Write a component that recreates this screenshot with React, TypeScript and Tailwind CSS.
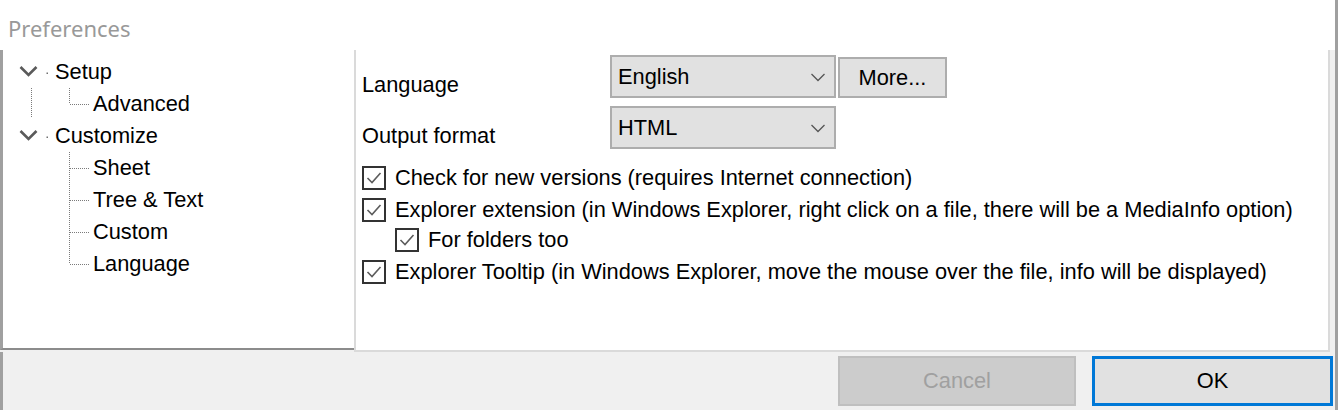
import React from "react";

const font = { fontFamily: '"Liberation Sans", Arial, sans-serif' };

function Chevron() {
  return (
    <svg width="52" height="32" viewBox="0 0 52 32" className="shrink-0">
      <polyline points="17.5,11 25.5,19 33.5,11" fill="none" stroke="#5a5a5a" strokeWidth="2.6" />
      <rect x="43.5" y="16.5" width="1.5" height="1.5" fill="#707070" />
    </svg>
  );
}

type ChildLine = "first-only" | "mid" | "last";

function ChildLines({ kind, parentPass }: { kind: ChildLine; parentPass?: boolean }) {
  const dots = { fill: "none", stroke: "#7a7a7a", strokeWidth: 1, strokeDasharray: "1 1" };
  return (
    <svg width="90" height="32" viewBox="0 0 90 32" className="shrink-0">
      {parentPass && <line x1="28.5" y1="0" x2="28.5" y2="30" {...dots} />}
      <line x1="66.5" y1={kind === "first-only" ? 0 : -2} x2="66.5" y2={kind === "mid" ? 32 : 16} {...dots} />
      <line x1="67" y1="16.5" x2="86" y2="16.5" {...dots} />
    </svg>
  );
}

function TopItem({ label }: { label: string }) {
  return (
    <div className="flex h-[32px] items-center">
      <Chevron />
      <span className="leading-none text-black">{label}</span>
    </div>
  );
}

function ChildItem({ label, kind, parentPass }: { label: string; kind: ChildLine; parentPass?: boolean }) {
  return (
    <div className="flex h-[32px] items-center">
      <ChildLines kind={kind} parentPass={parentPass} />
      <span className="leading-none text-black">{label}</span>
    </div>
  );
}

function Tree() {
  return (
    <div className="flex h-[300px] w-[354px] flex-col border-b-2 border-l-[3px] border-b-[#8c8c8c] border-l-[#a0a0a0] bg-white pt-[6px]">
      <TopItem label="Setup" />
      <ChildItem label="Advanced" kind="first-only" parentPass />
      <TopItem label="Customize" />
      <ChildItem label="Sheet" kind="mid" />
      <ChildItem label="Tree & Text" kind="mid" />
      <ChildItem label="Custom" kind="mid" />
      <ChildItem label="Language" kind="last" />
    </div>
  );
}

function Select({ value }: { value: string }) {
  return (
    <div className="flex h-[43px] w-[226px] items-center justify-between border-2 border-[#adadad] bg-[#e1e1e1] pl-[6px] pr-[8px]">
      <span className="leading-none">{value}</span>
      <svg width="16" height="10" viewBox="0 0 16 10">
        <polyline points="1.5,2 8,8.5 14.5,2" fill="none" stroke="#555" strokeWidth="1.3" />
      </svg>
    </div>
  );
}

function Check({ label, indent }: { label: string; indent?: boolean }) {
  return (
    <div className={`flex h-[30px] items-center ${indent ? "pl-[33px]" : ""}`}>
      <svg width="24" height="24" viewBox="0 0 24 24" className="mr-[9px] shrink-0">
        <rect x="1" y="1" width="22" height="22" fill="white" stroke="#333" strokeWidth="2" />
        <polyline points="5.5,12 10,16.5 18.5,7" fill="none" stroke="#5c5c5c" strokeWidth="1.6" />
      </svg>
      <span className="leading-none text-black whitespace-nowrap">{label}</span>
    </div>
  );
}

function Options() {
  return (
    <div className="flex h-[302px] flex-1 flex-col border-x-2 border-b-2 border-[#dadada] bg-white pl-[6px] pt-[5px]">
      <div className="flex h-[43px] items-end">
        <span className="w-[248px] pb-[1px] leading-[24px]">Language</span>
        <Select value="English" />
        <button className="ml-[2px] h-[41px] w-[109px] border-2 border-[#adadad] bg-[#e1e1e1] leading-none">More...</button>
      </div>
      <div className="mt-[8px] flex h-[43px] items-end">
        <span className="w-[248px] pb-[1px] leading-[24px]">Output format</span>
        <Select value="HTML" />
      </div>
      <div className="mt-[14px]">
        <Check label="Check for new versions (requires Internet connection)" />
      </div>
      <div className="mt-[2px]">
        <Check label="Explorer extension (in Windows Explorer, right click on a file, there will be a MediaInfo option)" />
      </div>
      <Check label="For folders too" indent />
      <div className="mt-[2px]">
        <Check label="Explorer Tooltip (in Windows Explorer, move the mouse over the file, info will be displayed)" />
      </div>
    </div>
  );
}

export default function App() {
  return (
    <div className="flex h-[410px] w-[1338px] flex-col border-r-[3px] border-[#a0a0a0] bg-[#f0f0f0] text-[21.8px] text-black" style={font}>
      <div className="flex h-[50px] items-center bg-white pl-[8px] pt-[6px]">
        <span className="text-[22px] text-[#999]" style={{ fontFamily: '"Noto Sans", sans-serif' }}>
          Preferences
        </span>
      </div>
      <div className="flex items-start pr-[5px]">
        <Tree />
        <Options />
      </div>
      <div className="flex flex-1 items-start justify-end gap-[16px] border-l-[3px] border-[#a0a0a0] pr-[2px] pt-[4px]">
        <button className="h-[50px] w-[238px] border-2 border-[#bfbfbf] bg-[#cccccc] leading-none text-[#a0a0a0]">Cancel</button>
        <button className="h-[50px] w-[241px] border-[3px] border-[#0078d7] bg-[#e1e1e1] leading-none">OK</button>
      </div>
    </div>
  );
}
